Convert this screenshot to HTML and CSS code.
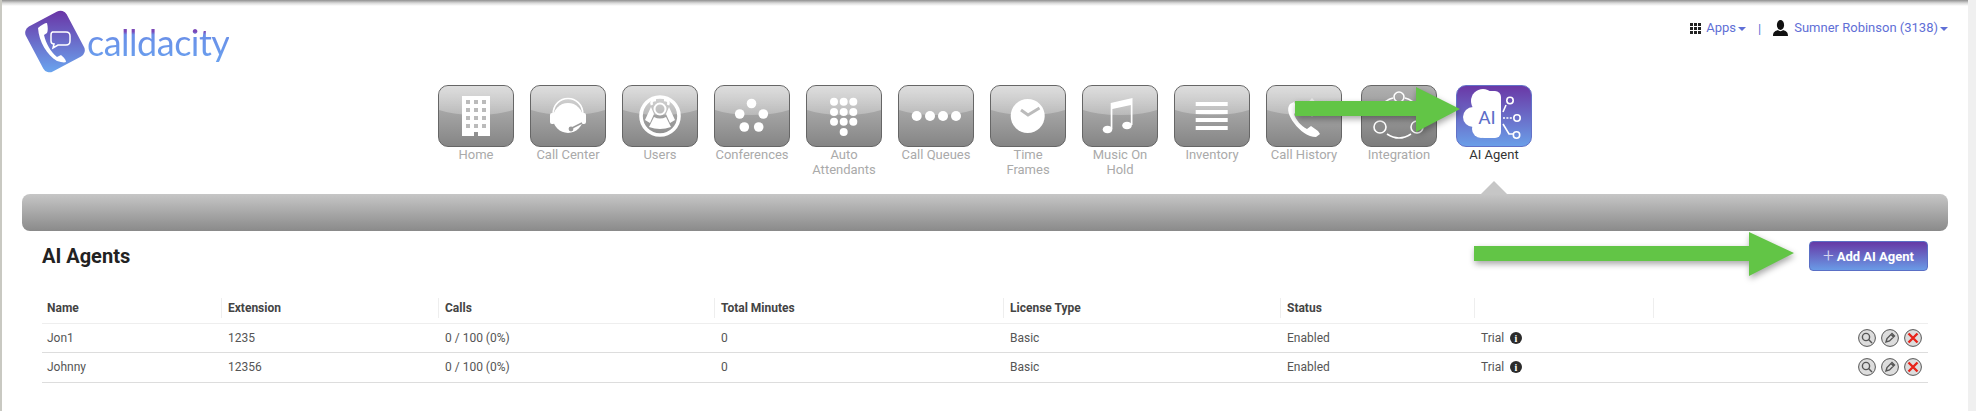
FILE: index.html
```html
<!DOCTYPE html>
<html lang="en">
<head>
  <meta charset="UTF-8" />
  <title>AI Agents</title>
  <meta name="viewport" content="width=device-width, initial-scale=1.0" />
  <link rel="stylesheet" href="styles.css">
</head>
<body>
  <div class="page">
    <div class="top-shade"></div>

    <header class="header">
      <a class="logo">
        <svg class="logo-icon" viewBox="0 0 65 68" width="65" height="68">
          <defs>
            <linearGradient id="logoFill" gradientUnits="userSpaceOnUse" x1="33" y1="3" x2="33" y2="64" gradientTransform="rotate(28 33 33.5)">
              <stop offset="0" stop-color="#6a35a6" />
              <stop offset="1" stop-color="#6aa4ee" />
            </linearGradient>
          </defs>
          <rect x="10" y="8" width="46" height="51" rx="7" transform="rotate(-28 33 33.5)" fill="url(#logoFill)" />
          <path d="M16 20 C19 17 23 15 25 15 C26 19 26 23 25 25 L22 27 C24 36 29 44 35 49 L39 47 C41 49 44 51 44 54 C42 55 39 54 35 53 C25 47 17 34 16 20 Z" fill="#fff" />
          <path d="M30 24 H44 Q48 24 48 28 V33 Q48 37 44 37 H36 L31 40 L32 36 Q29 36 29 33 V27 Q29 24 31 24 Z" fill="none" stroke="#fff" stroke-width="1.5" />
        </svg>
        <span class="logo-text">calldacity</span>
      </a>
      <div class="top-links">
        <svg class="apps-icon" viewBox="0 0 11 11" width="11" height="11">
          <path d="M0 0h3v3H0zM4 0h3v3H4zM8 0h3v3H8zM0 4h3v3H0zM4 4h3v3H4zM8 4h3v3H8zM0 8h3v3H0zM4 8h3v3H4zM8 8h3v3H8z" fill="#222" />
        </svg>
        <a class="top-link">Apps<i class="caret"></i></a>
        <span class="top-sep">|</span>
        <svg class="user-icon" viewBox="0 0 15 16" width="15" height="16">
          <ellipse cx="7.5" cy="5" rx="3.6" ry="5" fill="#111" />
          <path d="M0 16 C0 12 2 11 5 10 C6 11.5 9 11.5 10 10 C13 11 15 12 15 16 Z" fill="#111" />
        </svg>
        <a class="top-link">Sumner Robinson (3138)<i class="caret"></i></a>
      </div>
    </header>

    <nav class="nav">
      <a class="nav-item">
        <span class="tile">
          <svg viewBox="0 0 76 62">
            <path d="M24 11h28v40H40v-4h-4v4H24z" fill="#fff" />
            <path d="M28 15h4v4h-4zM36 15h4v4h-4zM44 15h4v4h-4zM28 23h4v4h-4zM36 23h4v4h-4zM44 23h4v4h-4zM28 31h4v4h-4zM36 31h4v4h-4zM44 31h4v4h-4zM28 39h4v4h-4zM36 39h4v4h-4zM44 39h4v4h-4z" fill="#bbb" />
          </svg>
        </span>
        <span class="nav-label">Home</span>
      </a>
      <a class="nav-item">
        <span class="tile">
          <svg viewBox="0 0 76 62">
            <circle cx="38" cy="33" r="15" fill="#fff" />
            <path d="M23 30 C23 8 53 8 53 30" fill="none" stroke="#fff" stroke-width="1.6" />
            <rect x="20" y="28" width="5" height="11" rx="2" fill="#fff" />
            <rect x="51" y="28" width="5" height="11" rx="2" fill="#fff" />
            <path d="M52 38 L42 43" stroke="#999" stroke-width="1.5" />
            <circle cx="41" cy="44" r="2.4" fill="#999" />
          </svg>
        </span>
        <span class="nav-label">Call Center</span>
      </a>
      <a class="nav-item">
        <span class="tile">
          <svg viewBox="0 0 76 62">
            <circle cx="38" cy="31" r="19" fill="none" stroke="#fff" stroke-width="3.6" />
            <circle cx="38" cy="24" r="5.5" fill="none" stroke="#fff" stroke-width="2" />
            <path d="M30 20 Q28 15 34 15 M46 20 Q48 15 42 15" fill="none" stroke="#fff" stroke-width="2.5" />
            <path d="M29 22 L23 35 L28 38 L32 29 Z M47 22 L53 35 L48 38 L44 29 Z" fill="#fff" />
            <path d="M32 32 Q38 35 44 32 L49 42 Q38 46 27 42 Z" fill="#fff" />
          </svg>
        </span>
        <span class="nav-label">Users</span>
      </a>
      <a class="nav-item">
        <span class="tile">
          <svg viewBox="0 0 76 62" fill="#fff">
            <circle cx="37.5" cy="18.5" r="4.8" />
            <circle cx="25.7" cy="29" r="4.8" />
            <circle cx="49.3" cy="29" r="4.8" />
            <circle cx="30.3" cy="42" r="4.8" />
            <circle cx="44.7" cy="42" r="4.8" />
          </svg>
        </span>
        <span class="nav-label">Conferences</span>
      </a>
      <a class="nav-item">
        <span class="tile">
          <svg viewBox="0 0 76 62" fill="#fff">
            <circle cx="28" cy="16.7" r="4" /><circle cx="37.7" cy="16.7" r="4" /><circle cx="47.3" cy="16.7" r="4" />
            <circle cx="28" cy="27" r="4" /><circle cx="37.7" cy="27" r="4" /><circle cx="47.3" cy="27" r="4" />
            <circle cx="28" cy="36.7" r="4" /><circle cx="37.7" cy="36.7" r="4" /><circle cx="47.3" cy="36.7" r="4" />
            <circle cx="37.7" cy="47" r="4" />
          </svg>
        </span>
        <span class="nav-label">Auto Attendants</span>
      </a>
      <a class="nav-item">
        <span class="tile">
          <svg viewBox="0 0 76 62" fill="#fff">
            <circle cx="18.7" cy="31" r="5" /><circle cx="32" cy="31" r="5" /><circle cx="45" cy="31" r="5" /><circle cx="58" cy="31" r="5" />
          </svg>
        </span>
        <span class="nav-label">Call Queues</span>
      </a>
      <a class="nav-item">
        <span class="tile">
          <svg viewBox="0 0 76 62">
            <circle cx="37.7" cy="31" r="17" fill="#fff" />
            <path d="M31 25 L38 30 L49.5 23" fill="none" stroke="#bbb" stroke-width="3" />
          </svg>
        </span>
        <span class="nav-label">Time<br>Frames</span>
      </a>
      <a class="nav-item">
        <span class="tile">
          <svg viewBox="0 0 76 62" fill="#fff">
            <ellipse cx="25.5" cy="44.5" rx="4.8" ry="3.8" />
            <ellipse cx="45" cy="40.5" rx="4.8" ry="3.8" />
            <path d="M28.7 44 V18 L50.5 13 V40 H48.8 V20 L30.4 24 V44 Z" />
          </svg>
        </span>
        <span class="nav-label">Music On Hold</span>
      </a>
      <a class="nav-item">
        <span class="tile">
          <svg viewBox="0 0 76 62" fill="#fff">
            <rect x="21.7" y="17" width="32" height="4" />
            <rect x="21.7" y="25" width="32" height="4" />
            <rect x="21.7" y="33" width="32" height="4" />
            <rect x="21.7" y="41" width="32" height="4" />
          </svg>
        </span>
        <span class="nav-label">Inventory</span>
      </a>
      <a class="nav-item">
        <span class="tile">
          <svg viewBox="0 0 76 62" fill="#fff">
            <path d="M46 13 L54 22 L46 32 L38 22 Z" opacity="0.55" />
            <path d="M24 19 L28 17 L32 25 L28 29 C30 35 35 41 41 44 L45 41 L52 46 L54 49 L50 52 C42 52 34 46 28 38 C23 31 20 24 24 19 Z" />
          </svg>
        </span>
        <span class="nav-label">Call History</span>
      </a>
      <a class="nav-item nav-item-spaced">
        <span class="tile tile-flat">
          <svg viewBox="0 0 76 62" fill="none" stroke="#fff" stroke-width="1.6">
            <circle cx="38" cy="12" r="5" />
            <circle cx="19" cy="42" r="6" />
            <circle cx="56" cy="42" r="6" />
            <path d="M26 49 Q38 57 50 49" />
            <path d="M32 13 Q24 15 20 22 M44 13 Q52 15 56 22" />
          </svg>
        </span>
        <span class="nav-label">Integration</span>
      </a>
      <a class="nav-item nav-item-spaced active">
        <span class="tile tile-brand">
          <svg viewBox="0 0 76 62">
            <g fill="#fff">
              <circle cx="27" cy="16" r="12" />
              <circle cx="17" cy="32" r="10" />
              <circle cx="25" cy="44" r="9" />
              <rect x="22" y="6" width="23" height="47" rx="6" />
            </g>
            <text class="ai-text" x="31" y="39" text-anchor="middle">AI</text>
            <g fill="none" stroke="#fff" stroke-width="1.6">
              <path d="M47 27 L50 20" />
              <circle cx="54" cy="15.5" r="3.2" />
              <path d="M47 33 H57" stroke-dasharray="2 1.4" />
              <circle cx="61" cy="33" r="3.2" />
              <path d="M47 39 L53 49 H57" />
              <circle cx="60.5" cy="50" r="3.2" />
            </g>
          </svg>
        </span>
        <span class="nav-label">AI Agent</span>
      </a>
    </nav>

    <div class="bar"></div>

    <section class="content">
      <div class="title-row">
        <h1>AI Agents</h1>
        <button class="add-btn"><span class="plus">+</span>Add AI Agent</button>
      </div>

      <table class="agents">
        <colgroup>
          <col class="col-name"><col class="col-ext"><col class="col-calls"><col class="col-mins">
          <col class="col-lic"><col class="col-status"><col class="col-trial"><col class="col-actions">
        </colgroup>
        <thead>
          <tr>
            <th><div>Name</div></th>
            <th><div>Extension</div></th>
            <th><div>Calls</div></th>
            <th><div>Total Minutes</div></th>
            <th><div>License Type</div></th>
            <th><div>Status</div></th>
            <th><div>&nbsp;</div></th>
            <th><div>&nbsp;</div></th>
          </tr>
        </thead>
        <tbody>
          <tr>
            <td>Jon1</td>
            <td>1235</td>
            <td>0 / 100 (0%)</td>
            <td>0</td>
            <td>Basic</td>
            <td>Enabled</td>
            <td>Trial <svg class="info" viewBox="0 0 12 12" width="12" height="12"><circle cx="6" cy="6" r="6" fill="#2b2b2b" /><text x="6" y="9.6" text-anchor="middle">i</text></svg></td>
            <td>
              <div class="row-actions">
                <svg class="act" viewBox="0 0 18 18"><circle cx="9" cy="9" r="8.4" /><circle class="glyph" cx="8" cy="8" r="3.6" /><path class="glyph" d="M10.6 10.6 L14 14" /></svg>
                <svg class="act" viewBox="0 0 18 18"><circle cx="9" cy="9" r="8.4" /><path class="glyph" d="M5 13 L6 9.5 L11 4.5 L13.5 7 L8.5 12 Z M10 5.5 L12.5 8" /></svg>
                <svg class="act" viewBox="0 0 18 18"><circle cx="9" cy="9" r="8.4" /><path class="cross" d="M4.5 4.5 L13.5 13.5 M13.5 4.5 L4.5 13.5" /></svg>
              </div>
            </td>
          </tr>
          <tr>
            <td>Johnny</td>
            <td>12356</td>
            <td>0 / 100 (0%)</td>
            <td>0</td>
            <td>Basic</td>
            <td>Enabled</td>
            <td>Trial <svg class="info" viewBox="0 0 12 12" width="12" height="12"><circle cx="6" cy="6" r="6" fill="#2b2b2b" /><text x="6" y="9.6" text-anchor="middle">i</text></svg></td>
            <td>
              <div class="row-actions">
                <svg class="act" viewBox="0 0 18 18"><circle cx="9" cy="9" r="8.4" /><circle class="glyph" cx="8" cy="8" r="3.6" /><path class="glyph" d="M10.6 10.6 L14 14" /></svg>
                <svg class="act" viewBox="0 0 18 18"><circle cx="9" cy="9" r="8.4" /><path class="glyph" d="M5 13 L6 9.5 L11 4.5 L13.5 7 L8.5 12 Z M10 5.5 L12.5 8" /></svg>
                <svg class="act" viewBox="0 0 18 18"><circle cx="9" cy="9" r="8.4" /><path class="cross" d="M4.5 4.5 L13.5 13.5 M13.5 4.5 L4.5 13.5" /></svg>
              </div>
            </td>
          </tr>
        </tbody>
      </table>
    </section>

    <svg class="arrow arrow-nav" viewBox="0 0 166 45" width="166" height="45">
      <polygon points="0,14 121,14 121,0 165,22 121,45 121,29 0,29" />
    </svg>
    <svg class="arrow arrow-add" viewBox="0 0 321 44" width="321" height="44">
      <polygon points="0,14 275,14 275,0 320,21 275,44 275,29 0,29" />
    </svg>
  </div>
</body>
</html>
```

FILE: styles.css
```css
* {
  box-sizing: border-box;
}

body {
  margin: 0;
  font-family: Roboto, 'Liberation Sans', sans-serif;
  font-size: 13px;
  color: #555;
  background: #fff;
}

.page {
  position: relative;
  height: 411px;
  overflow: hidden;
  border-left: 2px solid #c9c9c2;
  border-right: 8px solid #f0f0f0;
  background: #fff;
}

.top-shade {
  height: 6px;
  background: linear-gradient(#8f8f8f, #d8d8d8 50%, #fff);
}

/* header */
.header {
  display: flex;
  justify-content: space-between;
  align-items: flex-start;
  height: 79px;
  padding: 0 20px;
}

.logo {
  display: flex;
  align-items: flex-start;
  margin-top: 2px;
}

.logo-text {
  margin-top: 14px;
  font-family: Lato, 'Open Sans', sans-serif;
  font-size: 36px;
  line-height: 40px;
  letter-spacing: -0.5px;
  color: transparent;
  background: linear-gradient(#7a48b8 0, #7a48b8 24%, #6a8fe8 32%, #6aa0ee 100%);
  -webkit-background-clip: text;
  background-clip: text;
}

.top-links {
  display: flex;
  align-items: center;
  margin-top: 14px;
  height: 16px;
}

.top-link {
  color: #5f6fd6;
  line-height: 16px;
}

.apps-icon {
  margin-right: 5px;
}

.user-icon {
  margin-right: 6px;
}

.top-sep {
  margin: 0 12px 0 12px;
  color: #5f6fd6;
}

.caret {
  display: inline-block;
  margin-left: 2px;
  vertical-align: middle;
  border-top: 4px solid #5f6fd6;
  border-left: 4px solid transparent;
  border-right: 4px solid transparent;
}

/* icon nav */
.nav {
  display: flex;
  justify-content: center;
  gap: 16px;
  height: 109px;
}

.nav-item {
  position: relative;
  width: 76px;
  text-align: center;
}

.nav-item-spaced {
  margin-left: 3px;
}

.tile {
  position: relative;
  display: block;
  width: 76px;
  height: 62px;
  overflow: hidden;
  border: 1px solid #666;
  border-radius: 10px;
  background: linear-gradient(#bdbdbd, #858585);
}

.tile::before {
  content: "";
  position: absolute;
  left: -20px;
  top: -12px;
  width: 114px;
  height: 41px;
  border-radius: 50%;
  background: linear-gradient(rgba(255, 255, 255, 0.6), rgba(255, 255, 255, 0.25));
}

.tile svg {
  position: absolute;
  left: -1px;
  top: -1px;
  width: 76px;
  height: 62px;
}

.tile-flat {
  background: linear-gradient(#b0b0b0, #7c7c7c);
}

.tile-flat::before {
  display: none;
}

.tile-brand {
  border-color: #6272c8;
  background: linear-gradient(#6a38a6, #6a9ee8);
}

.tile-brand::before {
  display: none;
}

.ai-text {
  font-family: Roboto, sans-serif;
  font-size: 19px;
  fill: #5d6cc8;
}

.nav-label {
  display: block;
  margin: 0 -4px;
  line-height: 15px;
  color: #aaa;
}

.active .nav-label {
  color: #333;
}

.active::after {
  content: "";
  position: absolute;
  left: 25px;
  bottom: 0;
  border-bottom: 13px solid #c6c6c6;
  border-left: 13px solid transparent;
  border-right: 13px solid transparent;
}

.bar {
  height: 37px;
  margin: 0 20px;
  border-radius: 8px;
  background: linear-gradient(#c6c6c6, #8a8a8a);
}

/* page content */
.content {
  padding: 10px 40px 0;
}

.title-row {
  display: flex;
  justify-content: space-between;
  align-items: center;
  height: 30px;
  margin-bottom: 26px;
}

h1 {
  margin: 0;
  font-size: 20px;
  font-weight: 700;
  color: #222;
}

.add-btn {
  display: flex;
  align-items: center;
  height: 30px;
  padding: 0 13px;
  border: 1px solid #5a6fc5;
  border-radius: 4px;
  font: 700 13px Roboto, sans-serif;
  color: #fff;
  background: linear-gradient(#6639a6, #6a9be6);
}

.plus {
  margin-right: 3px;
  font-size: 19px;
  font-weight: 300;
  line-height: 20px;
  color: #d5d5f0;
}

.agents {
  width: 100%;
  table-layout: fixed;
  border-collapse: collapse;
  font-size: 12px;
}

.col-name { width: 179px; }
.col-ext { width: 217px; }
.col-calls { width: 276px; }
.col-mins { width: 289px; }
.col-lic { width: 277px; }
.col-status { width: 194px; }
.col-trial { width: 179px; }
.col-actions { width: 275px; }

.agents th {
  height: 26px;
  padding: 0 0 4px;
  border-bottom: 1px solid #eee;
  text-align: left;
  font-weight: 700;
  color: #444;
}

.agents th div {
  height: 20px;
  padding-left: 6px;
  line-height: 20px;
  border-left: 1px solid #eee;
}

.agents th:first-child div {
  padding-left: 5px;
  border-left: none;
}

.agents td {
  height: 29.5px;
  padding: 0 0 0 7px;
  border-bottom: 1px solid #ddd;
}

.agents td:first-child {
  padding-left: 5px;
}

.info {
  margin-left: 3px;
  vertical-align: -2px;
}

.info text {
  font: 700 10px 'Liberation Serif', serif;
  fill: #fff;
}

.row-actions {
  display: flex;
  justify-content: flex-end;
  gap: 5px;
  padding-right: 6px;
}

.act {
  width: 18px;
  height: 18px;
}

.act circle {
  fill: #ddd;
  stroke: #555;
  stroke-width: 1;
}

.act .glyph {
  fill: none;
  stroke: #555;
  stroke-width: 1.4;
}

.act .cross {
  fill: none;
  stroke: #e8231a;
  stroke-width: 2.4;
}

/* green callout arrows drawn over the screen */
.arrow {
  position: absolute;
  overflow: visible;
  filter: drop-shadow(1px 3px 3px rgba(0, 0, 0, 0.35));
}

.arrow polygon {
  fill: #62c546;
}

.arrow-nav {
  left: 1293px;
  top: 87px;
}

.arrow-add {
  left: 1472px;
  top: 232px;
}
```
